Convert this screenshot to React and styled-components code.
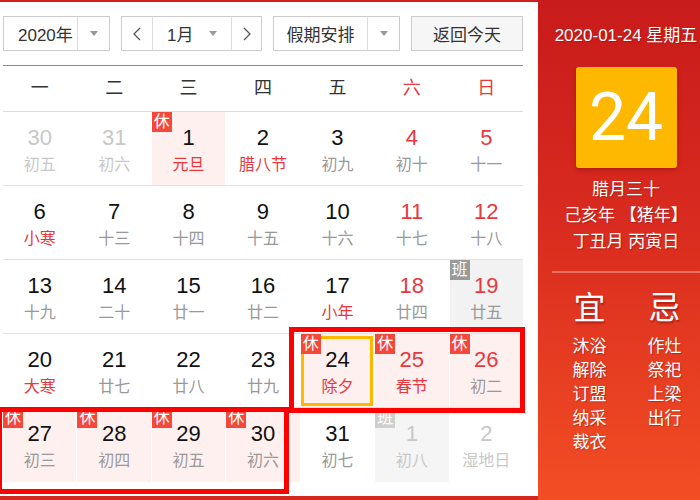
import React from "react";
import styled, { createGlobalStyle } from "styled-components";

const GlobalStyle = createGlobalStyle`
  html, body { margin: 0; padding: 0; background: #fff; }
  body { font-family: "Liberation Sans", "Noto Sans CJK SC", sans-serif; }
`;

const RED = "#e8383d";

const Frame = styled.div`
  display: flex;
  width: 700px;
  height: 500px;
  overflow: hidden;
`;

const Main = styled.div`
  position: relative;
  width: 538px;
  height: 500px;
  box-sizing: border-box;
  border-top: 2px solid #d3201f;
  border-bottom: 4px solid #d2281d;
  padding: 14px 15px 0 3px;
  background: #fff;
`;

const Toolbar = styled.div`
  display: flex;
  gap: 11px;
  height: 35px;
`;

const Box = styled.div`
  display: flex;
  width: ${(p) => p.$w}px;
  height: 35px;
  box-sizing: border-box;
  border: 1px solid #ccc;
  background: ${(p) => (p.$gray ? "#f6f6f6" : "#fff")};
  font-size: 17px;
  color: #333;
`;

const Seg = styled.div`
  display: flex;
  align-items: center;
  justify-content: ${(p) => p.$justify || "center"};
  flex: ${(p) => (p.$w ? "none" : 1)};
  width: ${(p) => (p.$w ? `${p.$w}px` : "auto")};
  padding: ${(p) => p.$pad || "0"};
  box-sizing: border-box;
  border-left: ${(p) => (p.$divider ? "1px solid #ddd" : "none")};
`;

const Caret = styled.span`
  width: 0;
  height: 0;
  border-left: 4px solid transparent;
  border-right: 4px solid transparent;
  border-top: 5px solid #999;
  margin-left: ${(p) => (p.$push ? "auto" : "0")};
`;

const Chevron = ({ dir }) => (
  <svg width="8" height="14" viewBox="0 0 8 14">
    <polyline
      points={dir === "left" ? "7,1 1,7 7,13" : "1,1 7,7 1,13"}
      fill="none"
      stroke="#555"
      strokeWidth="1.3"
    />
  </svg>
);

const WeekHead = styled.div`
  display: grid;
  grid-template-columns: repeat(7, 1fr);
  column-gap: 1px;
  margin-top: 14px;
  height: 47px;
  box-sizing: border-box;
  border-top: 1px solid #f06060;
  border-bottom: 1px solid #ddd;
`;

const WeekName = styled.div`
  text-align: center;
  line-height: 45px;
  font-size: 18px;
  color: ${(p) => (p.$weekend ? RED : "#333")};
`;

const Row = styled.div`
  display: grid;
  grid-template-columns: repeat(7, 1fr);
  column-gap: 1px;
  height: 74px;
  box-sizing: border-box;
  border-bottom: ${(p) => (p.$last ? "none" : "1px solid #e2e2e2")};
`;

const cellBg = { rest: "#fff0f0", work: "#f2f2f2", workOut: "#f5f5f5" };

const Cell = styled.div`
  position: relative;
  display: flex;
  flex-direction: column;
  align-items: center;
  padding-top: 13px;
  background: ${(p) => cellBg[p.$bg] || "transparent"};

  &::after {
    content: "";
    display: ${(p) => (p.$today ? "block" : "none")};
    position: absolute;
    top: 2px;
    left: 0;
    right: 1px;
    bottom: 1px;
    border: 3px solid #ffb800;
  }
`;

const Num = styled.div`
  font-size: 22px;
  line-height: 26px;
  color: ${(p) => p.$color};
`;

const Lunar = styled.div`
  margin-top: 4px;
  font-size: 16px;
  line-height: 20px;
  color: ${(p) => p.$color};
`;

const badgeBg = { 休: "#f5483b", 班: "#9a9a9a", 班out: "#cfcfcf" };

const Badge = styled.span`
  position: absolute;
  top: 0;
  left: 0;
  z-index: 2;
  width: 20px;
  height: 20px;
  line-height: 20px;
  text-align: center;
  font-size: 16px;
  color: #fff;
  background: ${(p) => badgeBg[p.$kind]};
`;

const Mark = styled.div`
  position: absolute;
  left: ${(p) => p.$x}px;
  top: ${(p) => p.$y}px;
  width: ${(p) => p.$w}px;
  height: ${(p) => p.$h}px;
  box-sizing: border-box;
  border: 5px solid #ff0000;
  pointer-events: none;
  z-index: 3;
`;

const Side = styled.aside`
  width: 162px;
  height: 500px;
  box-sizing: border-box;
  padding: 24px 0 0 14px;
  display: flex;
  flex-direction: column;
  align-items: center;
  color: #fff;
  background: linear-gradient(180deg, #c81b1b 0%, #d92b1f 45%, #f24e24 100%);
  text-shadow: 1px 1px 1px rgba(110, 0, 0, 0.35);
`;

const DateLine = styled.div`
  font-size: 17px;
  line-height: 24px;
  white-space: nowrap;
`;

const DayBox = styled.div`
  margin-top: 19px;
  width: 101px;
  height: 101px;
  display: flex;
  align-items: center;
  justify-content: center;
  border-radius: 3px;
  background: #ffb800;
  box-shadow: 0 2px 4px rgba(90, 0, 0, 0.3);
  font-family: Roboto, "Liberation Sans", sans-serif;
  font-weight: 400;
  font-size: 66px;
  line-height: 1;
  text-shadow: none;
`;

const InfoLine = styled.div`
  font-size: 17px;
  line-height: 26px;
  white-space: nowrap;
  margin-top: ${(p) => (p.$first ? "9px" : "0")};
`;

const Divider = styled.div`
  align-self: stretch;
  height: 2px;
  margin-top: 16px;
  background: rgba(255, 255, 255, 0.3);
`;

const Advice = styled.div`
  align-self: stretch;
  display: grid;
  grid-template-columns: 75px 75px;
  margin-top: 15px;
`;

const AdviceCol = styled.div`
  display: flex;
  flex-direction: column;
  align-items: center;
`;

const AdviceTitle = styled.div`
  font-size: 32px;
  line-height: 40px;
  margin-bottom: 7px;
  text-shadow: 1px 2px 2px rgba(110, 0, 0, 0.45);
`;

const AdviceItem = styled.div`
  font-size: 17px;
  line-height: 24px;
`;

const weeks = ["一", "二", "三", "四", "五", "六", "日"];

// n: number, l: lunar, out: other month, fest: red lunar, b: badge, bg, today
const rows = [
  [
    { n: 30, l: "初五", out: true },
    { n: 31, l: "初六", out: true },
    { n: 1, l: "元旦", fest: true, b: "休", bg: "rest" },
    { n: 2, l: "腊八节", fest: true },
    { n: 3, l: "初九" },
    { n: 4, l: "初十" },
    { n: 5, l: "十一" },
  ],
  [
    { n: 6, l: "小寒", fest: true },
    { n: 7, l: "十三" },
    { n: 8, l: "十四" },
    { n: 9, l: "十五" },
    { n: 10, l: "十六" },
    { n: 11, l: "十七" },
    { n: 12, l: "十八" },
  ],
  [
    { n: 13, l: "十九" },
    { n: 14, l: "二十" },
    { n: 15, l: "廿一" },
    { n: 16, l: "廿二" },
    { n: 17, l: "小年", fest: true },
    { n: 18, l: "廿四" },
    { n: 19, l: "廿五", b: "班", bg: "work" },
  ],
  [
    { n: 20, l: "大寒", fest: true },
    { n: 21, l: "廿七" },
    { n: 22, l: "廿八" },
    { n: 23, l: "廿九" },
    { n: 24, l: "除夕", fest: true, b: "休", bg: "rest", today: true },
    { n: 25, l: "春节", fest: true, b: "休", bg: "rest" },
    { n: 26, l: "初二", b: "休", bg: "rest" },
  ],
  [
    { n: 27, l: "初三", b: "休", bg: "rest" },
    { n: 28, l: "初四", b: "休", bg: "rest" },
    { n: 29, l: "初五", b: "休", bg: "rest" },
    { n: 30, l: "初六", b: "休", bg: "rest" },
    { n: 31, l: "初七" },
    { n: 1, l: "初八", out: true, b: "班out", bg: "workOut" },
    { n: 2, l: "湿地日", out: true },
  ],
];

const yi = ["沐浴", "解除", "订盟", "纳采", "裁衣"];
const ji = ["作灶", "祭祀", "上梁", "出行"];

function numColor(d, col) {
  if (d.out) return "#c8c8c8";
  if (col >= 5) return RED;
  return "#111";
}

function lunarColor(d) {
  if (d.out) return "#c8c8c8";
  if (d.fest) return RED;
  return "#999";
}

export default function App() {
  return (
    <>
      <GlobalStyle />
      <Frame>
        <Main>
          <Toolbar>
            <Box $w={107}>
              <Seg $justify="flex-start" $pad="0 0 0 14px">2020年</Seg>
              <Seg $w={32} $divider>
                <Caret />
              </Seg>
            </Box>
            <Box $w={141}>
              <Seg $w={30}>
                <Chevron dir="left" />
              </Seg>
              <Seg $divider $justify="flex-start" $pad="0 14px 0 14px">
                1月
                <Caret $push />
              </Seg>
              <Seg $w={30} $divider>
                <Chevron dir="right" />
              </Seg>
            </Box>
            <Box $w={127}>
              <Seg>假期安排</Seg>
              <Seg $w={32} $divider>
                <Caret />
              </Seg>
            </Box>
            <Box $w={112} $gray>
              <Seg>返回今天</Seg>
            </Box>
          </Toolbar>

          <WeekHead>
            {weeks.map((w, i) => (
              <WeekName key={w} $weekend={i >= 5}>
                {w}
              </WeekName>
            ))}
          </WeekHead>

          {rows.map((row, ri) => (
            <Row key={ri} $last={ri === rows.length - 1}>
              {row.map((d, ci) => (
                <Cell key={ci} $bg={d.bg} $today={d.today}>
                  {d.b && <Badge $kind={d.b}>{d.b === "班out" ? "班" : d.b}</Badge>}
                  <Num $color={numColor(d, ci)}>{d.n}</Num>
                  <Lunar $color={lunarColor(d)}>{d.l}</Lunar>
                </Cell>
              ))}
            </Row>
          ))}

          <Mark $x={289} $y={325} $w={236} $h={86} />
          <Mark $x={-3} $y={405} $w={292} $h={87} />
        </Main>

        <Side>
          <DateLine>2020-01-24 星期五</DateLine>
          <DayBox>24</DayBox>
          <InfoLine $first>腊月三十</InfoLine>
          <InfoLine>己亥年 【猪年】</InfoLine>
          <InfoLine>丁丑月 丙寅日</InfoLine>
          <Divider />
          <Advice>
            <AdviceCol>
              <AdviceTitle>宜</AdviceTitle>
              {yi.map((t) => (
                <AdviceItem key={t}>{t}</AdviceItem>
              ))}
            </AdviceCol>
            <AdviceCol>
              <AdviceTitle>忌</AdviceTitle>
              {ji.map((t) => (
                <AdviceItem key={t}>{t}</AdviceItem>
              ))}
            </AdviceCol>
          </Advice>
        </Side>
      </Frame>
    </>
  );
}
